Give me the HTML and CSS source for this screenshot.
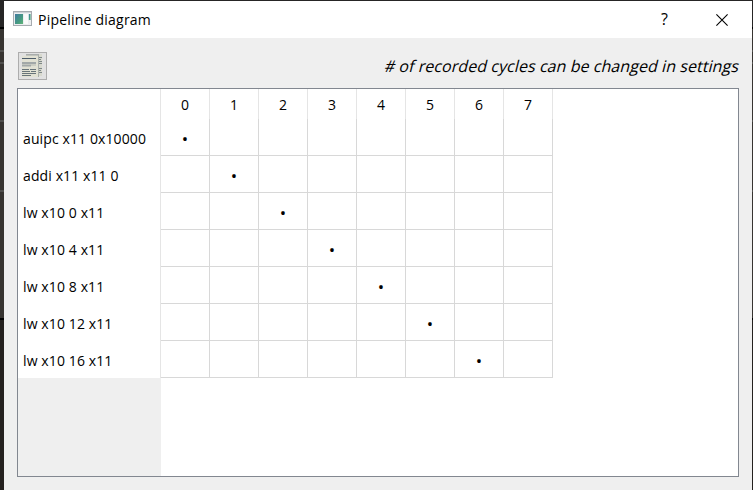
FILE: index.html
```html
<!DOCTYPE html>
<html lang="en">
<head>
<meta charset="utf-8">
<title>Pipeline diagram</title>
<link rel="stylesheet" href="styles.css">
</head>
<body>
<div class="window">
  <header class="titlebar">
    <svg class="app-icon" width="19" height="15" viewBox="0 0 19 15" shape-rendering="crispEdges">
      <defs><linearGradient id="g" x1="0" y1="0" x2="1" y2="1"><stop offset="0" stop-color="#427aa0"/><stop offset=".6" stop-color="#469a82"/><stop offset="1" stop-color="#62b578"/></linearGradient></defs>
      <rect x=".5" y=".5" width="18" height="14" fill="#eceef0" stroke="#a6abb0"/>
      <rect x="1" y="1" width="17" height="1" fill="#cdd2d7"/>
      <rect x="2" y="3" width="8" height="10" fill="url(#g)"/>
      <rect x="11" y="3" width="4" height="10" fill="#fafafa"/>
      <rect x="15" y="3" width="1" height="6" fill="#c9e0e4"/>
      <rect x="16" y="3" width="1" height="6" fill="url(#g)"/>
      <rect x="17" y="3" width="1" height="6" fill="#8fc3b0"/>
    </svg>
    <h1 class="title">Pipeline diagram</h1>
    <span class="help">?</span>
    <svg class="close" width="12" height="12" viewBox="0 0 12 12"><path d="M.4.4 11.6 11.6M11.6.4.4 11.6" stroke="#000" stroke-width="1.1"/></svg>
  </header>
  <div class="toolbar">
    <svg class="copy" width="29" height="28" viewBox="0 0 29 28">
      <rect x=".5" y=".5" width="28" height="27" fill="#e1e1e1" stroke="#adadad"/>
      <path d="M8 2h16v22H8z" fill="#d8d9ce"/>
      <path d="M8 2h13v1.500H8z" fill="#a9adac"/>
      <path d="M20 5.500h4M20 7.500h3M20 9.500h4M20 11.500h4M20 16.500h4M20 18.500h3M20 20.500h4" stroke="#7e8889"/>
      <path d="M4 4h16v21H4z" fill="#e1e1d3"/>
      <path d="M20.500 3v22" stroke="#a9aeaa"/>
      <path d="M4 6.500h14" stroke="#4d5d6b"/>
      <path d="M4 11h14M4 13.500h9" stroke="#a2a8a8" stroke-width="2"/>
      <path d="M13 13h5" stroke="#b5b9b2"/>
      <path d="M4 17.500h7M12 17.500h6M4 19.500h8M13 19.500h5M4 21.500h14M4 23.500h9" stroke="#68747a"/>
    </svg>
    <p class="hint">#&nbsp;of recorded cycles can be changed in settings</p>
  </div>
  <main class="view">
    <table class="pipeline">
      <thead><tr><th class="name"></th><th>0</th><th>1</th><th>2</th><th>3</th><th>4</th><th>5</th><th>6</th><th>7</th></tr></thead>
      <tbody>
        <tr><th class="name">auipc x11 0x10000</th><td>•</td><td></td><td></td><td></td><td></td><td></td><td></td><td></td></tr>
        <tr><th class="name">addi x11 x11 0</th><td></td><td>•</td><td></td><td></td><td></td><td></td><td></td><td></td></tr>
        <tr><th class="name">lw x10 0 x11</th><td></td><td></td><td>•</td><td></td><td></td><td></td><td></td><td></td></tr>
        <tr><th class="name">lw x10 4 x11</th><td></td><td></td><td></td><td>•</td><td></td><td></td><td></td><td></td></tr>
        <tr><th class="name">lw x10 8 x11</th><td></td><td></td><td></td><td></td><td>•</td><td></td><td></td><td></td></tr>
        <tr><th class="name">lw x10 12 x11</th><td></td><td></td><td></td><td></td><td></td><td>•</td><td></td><td></td></tr>
        <tr><th class="name">lw x10 16 x11</th><td></td><td></td><td></td><td></td><td></td><td></td><td>•</td><td></td></tr>
      </tbody>
    </table>
    <div class="header-rest"></div>
  </main>
</div>
</body>
</html>
```
FILE: styles.css
```css
* { box-sizing: border-box; }
body {
  margin: 0;
  height: 490px;
  overflow: hidden;
  padding: 1px 1px 0 4px;
  font: 14px "Open Sans", "Noto Sans", sans-serif;
  color: #000;
  background: linear-gradient(#262525 0 27px, #000 27px 29px, #373431 29px 50px, #51504e 50px 52px, #373431 52px 62px, #51504e 62px 64px, #373431 64px 120px, #51504e 120px 122px, #373431 122px 190px, #51504e 190px 192px, #373431 192px 318px, #000 318px 320px, #24211f 320px);
}
.window {
  height: 489px;
  display: flex;
  flex-direction: column;
  background: #efefef;
}
.titlebar {
  height: 37px;
  display: flex;
  align-items: center;
  padding: 0 24px 0 9px;
  background: #fff;
}
.app-icon { margin-right: 6px; margin-top: -2px; }
.title {
  flex: 1;
  margin: 0;
  font-size: 14px;
  font-weight: 400;
  letter-spacing: 0.22px;
}
.help { font-size: 16px; margin: -2px 48px 0 0; }
.toolbar {
  height: 50px;
  display: flex;
  justify-content: space-between;
  padding: 14px 14px 0;
}
.hint {
  margin: 2px 0 0;
  font-size: 16px;
  line-height: 24px;
  white-space: nowrap;
  letter-spacing: 0.06px;
  transform: skewX(-14deg);
}
.view {
  height: 389px;
  margin: 0 13px;
  display: flex;
  flex-direction: column;
  border: 1px solid #828790;
  background: #fff;
}
.pipeline {
  width: 535px;
  table-layout: fixed;
  border-spacing: 0;
}
.pipeline th,
.pipeline td {
  width: 49px;
  height: 37px;
  padding: 0;
  text-align: center;
  font-weight: 400;
  line-height: 20px;
  border-right: 1px solid #d8d8d8;
  border-bottom: 1px solid #d8d8d8;
}
.pipeline td {
  padding-top: 3px;
  font-size: 17px;
}
.pipeline thead th {
  height: 30px;
  padding-top: 2px;
  border-bottom: 0;
  border-right-color: #e5e5e5;
}
.pipeline .name {
  width: 143px;
  padding: 2px 0 0 5px;
  text-align: left;
  letter-spacing: 0.11px;
  border-bottom: 0;
  border-right-color: #e5e5e5;
}
.header-rest {
  width: 143px;
  flex: 1;
  background: #efefef;
}
```
